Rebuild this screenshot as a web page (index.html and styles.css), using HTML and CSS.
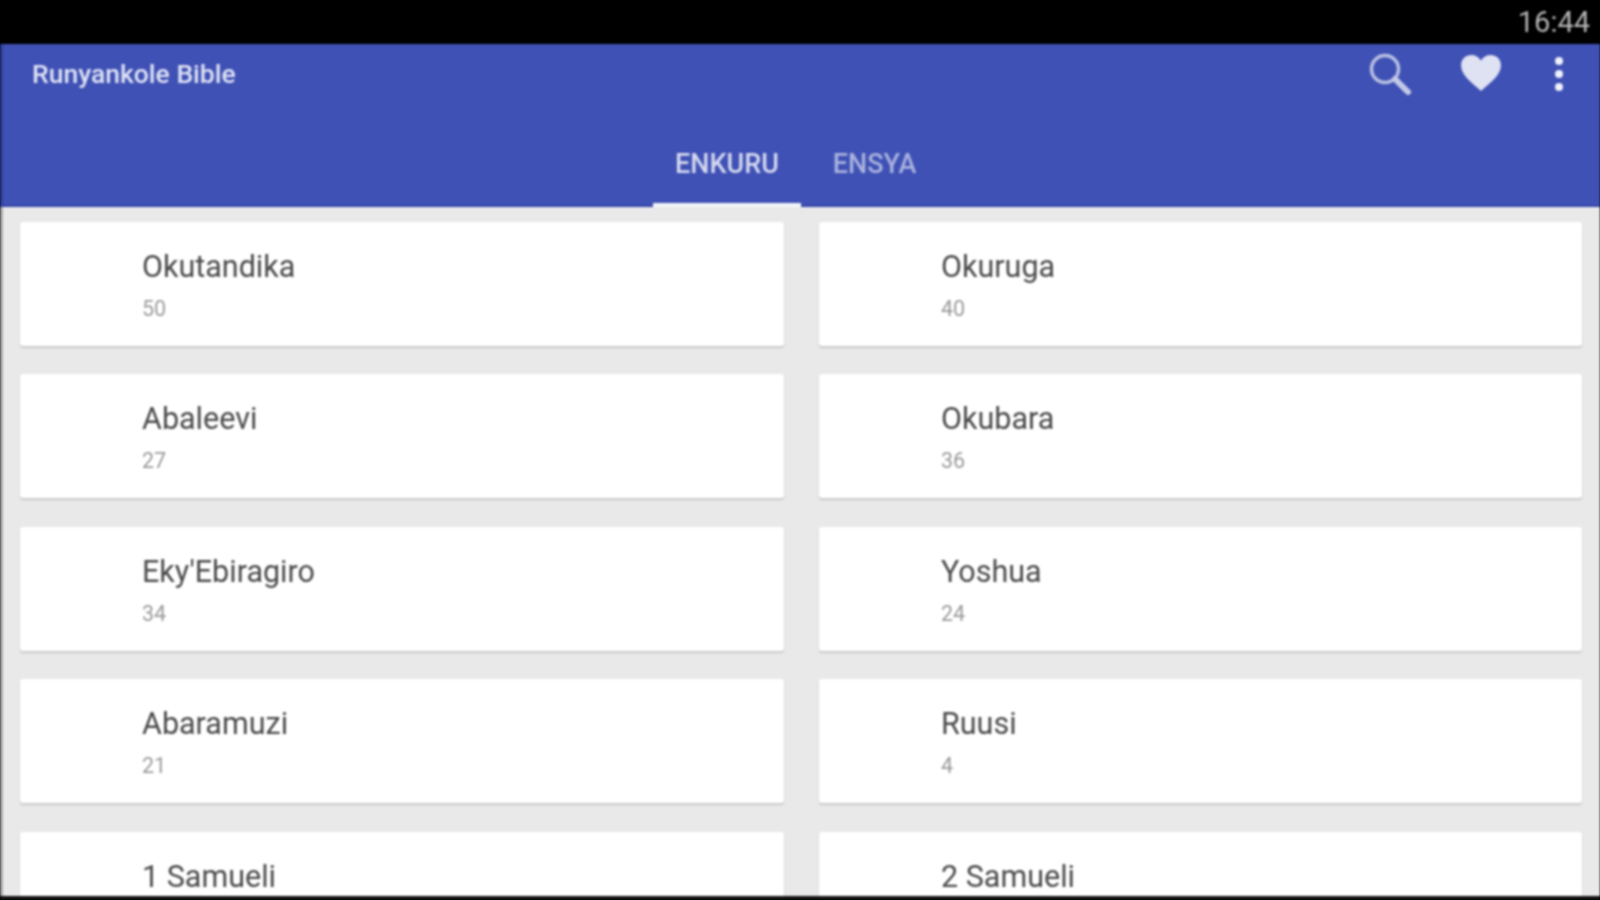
FILE: index.html
```html
<!DOCTYPE html>
<html lang="en">
<head>
    <meta charset="UTF-8">
    <title>Runyankole Bible</title>
    <link rel="stylesheet" href="styles.css">
</head>
<body>
    <div class="screen">
        <!-- Status bar -->
        <div class="status-bar">
            <span class="clock">16:44</span>
        </div>

        <!-- App bar -->
        <header class="app-bar">
            <div class="toolbar">
                <span class="app-title">Runyankole Bible</span>
                <div class="actions">
                    <svg class="icon icon-search" width="48" height="48" viewBox="0 0 48 48">
                        <circle cx="19" cy="19" r="13.5" fill="none" stroke="#b9c0e2" stroke-width="3.5"/>
                        <path d="M29 29 L42 42" stroke="#c3c9e7" stroke-width="6" stroke-linecap="round"/>
                    </svg>
                    <svg class="icon icon-heart" width="42" height="38" viewBox="0 0 44 40">
                        <path d="M22 39 C14 31 1 23 1 12 C1 5 6 1 12 1 C16 1 20 3 22 7 C24 3 28 1 32 1 C38 1 43 5 43 12 C43 23 30 31 22 39 Z" fill="#dfe2f3"/>
                    </svg>
                    <svg class="icon icon-more" width="10" height="36" viewBox="0 0 10 36">
                        <circle cx="5" cy="5" r="4" fill="#f2f3fb"/>
                        <circle cx="5" cy="18" r="4" fill="#f2f3fb"/>
                        <circle cx="5" cy="31" r="4" fill="#f2f3fb"/>
                    </svg>
                </div>
            </div>
            <nav class="tabs">
                <a class="tab active">ENKURU</a>
                <a class="tab">ENSYA</a>
            </nav>
        </header>

        <!-- Books -->
        <main class="book-list">
            <div class="book-card"><div class="book-name">Okutandika</div><div class="book-count">50</div></div>
            <div class="book-card"><div class="book-name">Okuruga</div><div class="book-count">40</div></div>
            <div class="book-card"><div class="book-name">Abaleevi</div><div class="book-count">27</div></div>
            <div class="book-card"><div class="book-name">Okubara</div><div class="book-count">36</div></div>
            <div class="book-card"><div class="book-name">Eky'Ebiragiro</div><div class="book-count">34</div></div>
            <div class="book-card"><div class="book-name">Yoshua</div><div class="book-count">24</div></div>
            <div class="book-card"><div class="book-name">Abaramuzi</div><div class="book-count">21</div></div>
            <div class="book-card"><div class="book-name">Ruusi</div><div class="book-count">4</div></div>
            <div class="book-card"><div class="book-name">1 Samueli</div></div>
            <div class="book-card"><div class="book-name">2 Samueli</div></div>
        </main>

        <div class="bottom-edge"></div>
    </div>
</body>
</html>
```

FILE: styles.css
```css
* {
    margin: 0;
    padding: 0;
    box-sizing: border-box;
}

html {
    background-color: #000000;
}

body {
    font-family: Roboto, "Liberation Sans", sans-serif;
    overflow: hidden;
    height: 100vh;
    width: 100vw;
}

/* The reference is an upscaled low-res capture, so everything is a little soft */
.screen {
    display: flex;
    flex-direction: column;
    height: 900px;
    width: 1600px;
    background-color: #e9e9e9;
    border-left: 3px solid #a9a9a9;
    filter: blur(0.9px);
}

/* Status bar */
.status-bar {
    flex: none;
    height: 44px;
    margin-left: -3px;
    background-color: #000000;
    display: flex;
    align-items: center;
    justify-content: flex-end;
    padding-right: 10px;
}

.clock {
    color: #b4b4b4;
    font-size: 29px;
}

/* App bar */
.app-bar {
    flex: none;
    height: 163px;
    margin-left: -3px;
    background-color: #3f51b5;
    border-left: 3px solid #2f3f9c;
    border-bottom: 2px solid #3546a8;
    display: flex;
    flex-direction: column;
}

.toolbar {
    height: 60px;
    display: flex;
    align-items: center;
    justify-content: space-between;
    padding-left: 29px;
}

.app-title {
    color: #dfe3f4;
    font-size: 26.5px;
    font-weight: 500;
    margin-bottom: 2px;
}

.actions {
    display: flex;
    align-items: center;
}

.icon-search {
    margin-right: 46px;
}

.icon-heart {
    margin-right: 52px;
    margin-bottom: 2px;
}

.icon-more {
    margin-right: 36px;
    margin-bottom: 1px;
}

/* Tabs */
.tabs {
    height: 101px;
    display: flex;
    padding-left: 650px;
}

.tab {
    display: flex;
    align-items: center;
    justify-content: center;
    height: 103px;
    padding: 20px 22px 0;
    font-size: 27px;
    font-weight: 500;
    color: #a9b2de;
    border-bottom: 4px solid transparent;
}

.tab.active {
    color: #d5d9ef;
    border-bottom-color: #f4f5fb;
    margin-right: 10px;
}

/* Books */
.book-list {
    flex: 1;
    min-height: 0;
    overflow: hidden;
    display: grid;
    grid-template-columns: 764px 763px;
    grid-auto-rows: 124px;
    column-gap: 35px;
    row-gap: 28.5px;
    padding: 14.5px 0 0 17px;
}

.book-card {
    background-color: #ffffff;
    border-radius: 3px;
    box-shadow: 0 2px 2px rgba(0, 0, 0, 0.14);
    padding: 27px 0 0 122px;
}

.book-name {
    font-size: 30.5px;
    line-height: 36px;
    color: #4a4a4a;
}

.book-count {
    margin-top: 12px;
    font-size: 21.5px;
    line-height: 24px;
    color: #9a9a9a;
}

.bottom-edge {
    flex: none;
    height: 4px;
    margin-left: -3px;
    background-color: #111111;
}
```
